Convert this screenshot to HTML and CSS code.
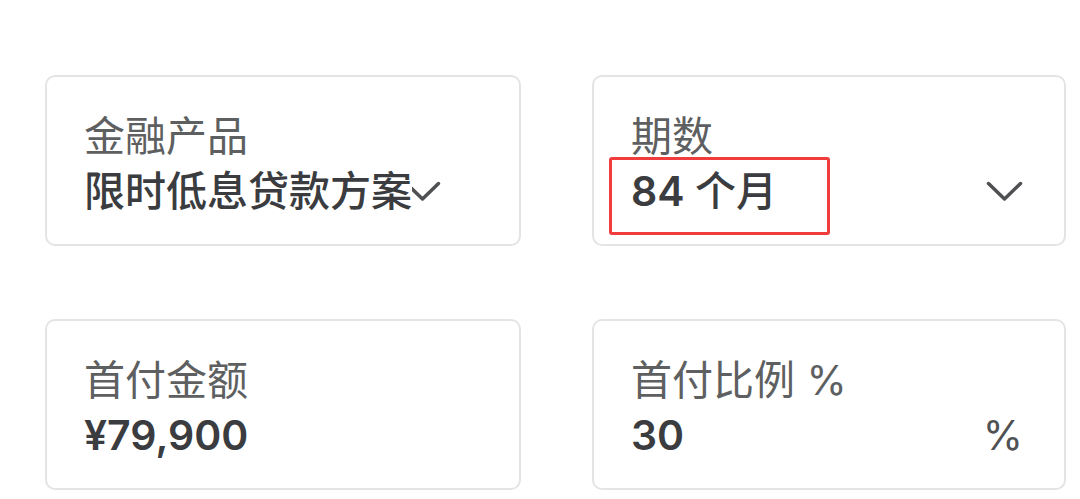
FILE: index.html
```html
<!DOCTYPE html>
<html lang="zh-CN">
<head>
<meta charset="utf-8">
<title>贷款方案</title>
<link rel="stylesheet" href="styles.css">
</head>
<body>
<div class="form">
  <div class="card">
    <div class="label">金融产品</div>
    <div class="value-row value-row--tight">
      <span class="value value--cjk value--masked">限时低息贷款方案</span>
      <svg class="chevron chevron--overlap" width="37" height="21" viewBox="0 0 37 21"><path d="M2.5 2.5 L18.5 18 L34.5 2.5" fill="none" stroke="#4f5053" stroke-width="3.5" stroke-linecap="round" stroke-linejoin="round"/></svg>
    </div>
  </div>
  <div class="card">
    <div class="label">期数</div>
    <div class="value-row">
      <span class="value">84 <span class="value--cjk">个月</span></span>
      <svg class="chevron" width="37" height="21" viewBox="0 0 37 21"><path d="M2.5 2.5 L18.5 18 L34.5 2.5" fill="none" stroke="#4f5053" stroke-width="3.5" stroke-linecap="round" stroke-linejoin="round"/></svg>
    </div>
    <div class="highlight"></div>
  </div>
  <div class="card">
    <div class="label">首付金额</div>
    <div class="value-row">
      <span class="value">¥79,900</span>
    </div>
  </div>
  <div class="card">
    <div class="label">首付比例 %</div>
    <div class="value-row">
      <span class="value">30</span>
      <span class="unit">%</span>
    </div>
  </div>
</div>
</body>
</html>
```
FILE: styles.css
```css
html, body {
  margin: 0;
  padding: 0;
  background: #ffffff;
}

body {
  font-family: Inter, "Noto Sans CJK SC", sans-serif;
  width: 1080px;
  height: 499px;
  overflow: hidden;
}

.form {
  display: grid;
  grid-template-columns: 476px 474px;
  grid-auto-rows: 171px;
  column-gap: 71px;
  row-gap: 73px;
  padding: 75px 0 0 45px;
}

.card {
  position: relative;
  box-sizing: border-box;
  border: 2px solid #e4e4e4;
  border-radius: 10px;
  padding: 32px 41px 0 37px;
}

.label {
  font-size: 41px;
  line-height: 55px;
  color: #5e5f61;
  font-weight: 400;
  white-space: nowrap;
}

.value-row {
  display: flex;
  align-items: center;
  justify-content: space-between;
  height: 55px;
}

.value-row--tight {
  justify-content: flex-start;
}

.value {
  font-size: 41px;
  line-height: 55px;
  color: #3a3c40;
  font-weight: 600;
  white-space: nowrap;
}

.value--cjk {
  font-weight: 500;
}

.value--masked {
  position: relative;
  z-index: 1;
  background: #ffffff;
}

.unit {
  font-size: 41px;
  line-height: 55px;
  color: #505154;
  font-weight: 400;
}

.chevron {
  display: block;
  flex: none;
}

.chevron--overlap {
  margin-left: -8px;
}

.highlight {
  position: absolute;
  left: 15px;
  top: 80px;
  width: 221px;
  height: 78px;
  box-sizing: border-box;
  border: 3px solid #f03c3c;
  border-radius: 3px;
}
```
